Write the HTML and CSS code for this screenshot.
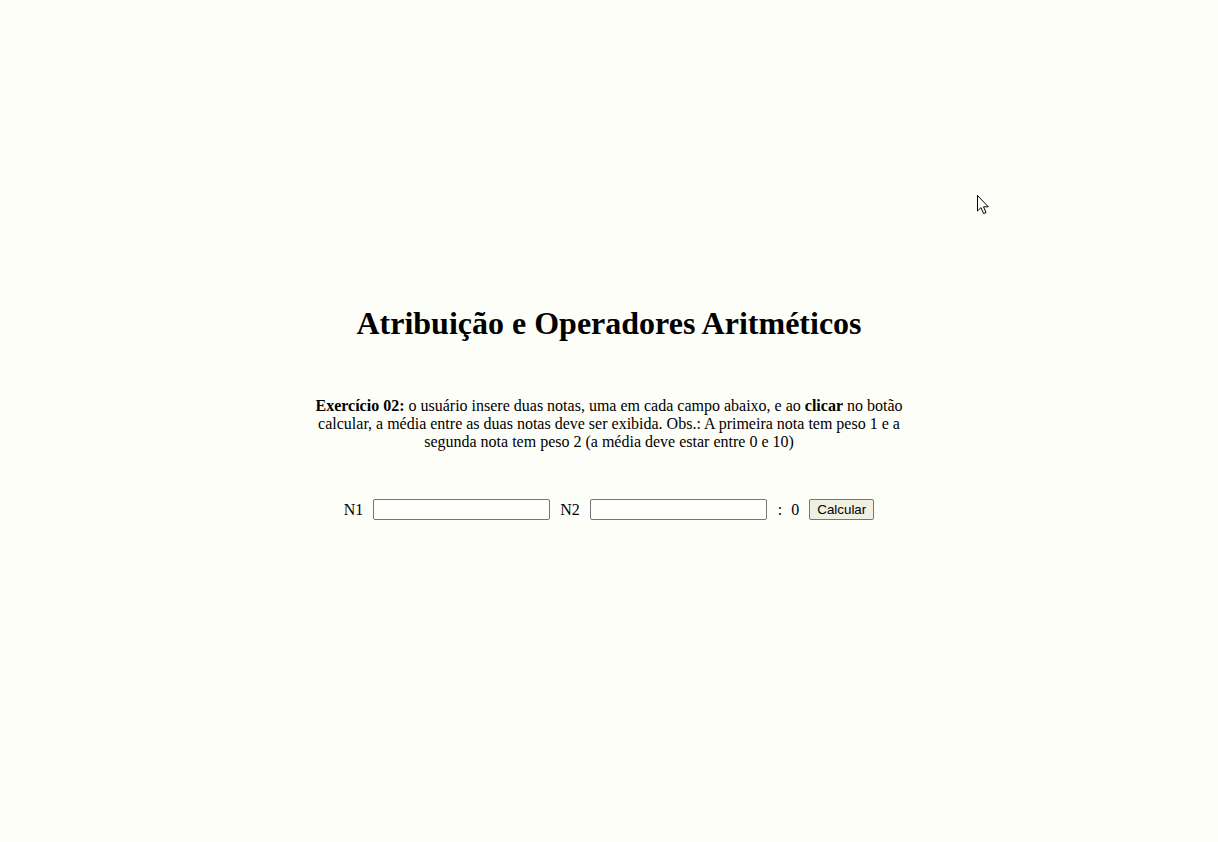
FILE: index.html
```html
<!DOCTYPE html>
<html lang="pt-BR">
<head>
<meta charset="utf-8">
<title>Atribuição e Operadores Aritméticos</title>
<link rel="stylesheet" href="styles.css">
</head>
<body>
<main class="page">
  <h1 class="title">Atribuição e Operadores Aritméticos</h1>
  <p class="desc"><strong>Exercício 02:</strong> o usuário insere duas notas, uma em cada campo abaixo, e ao <strong>clicar</strong> no botão calcular, a média entre as duas notas deve ser exibida. Obs.: A primeira nota tem peso 1 e a segunda nota tem peso 2 (a média deve estar entre 0 e 10)</p>
  <div class="row">
    <label class="lbl" for="n1">N1</label>
    <input class="field" id="n1" type="text">
    <label class="lbl" for="n2">N2</label>
    <input class="field" id="n2" type="text">
    <span class="colon">:</span>
    <span class="result">0</span>
    <button class="btn" type="button">Calcular</button>
  </div>
</main>
<svg class="cursor" width="14" height="22" viewBox="0 0 14 22" aria-hidden="true">
  <path d="M1.5 1.5 L1.5 17 L5 13.6 L7.6 19.6 L10 18.6 L7.5 12.8 L12.3 12.8 Z" fill="#fff" stroke="#000" stroke-width="1" stroke-linejoin="miter"/>
</svg>
</body>
</html>
```
FILE: styles.css
```css
html, body {
  margin: 0;
  padding: 0;
}
body {
  background-color: #fefef8;
  font-family: "Liberation Serif", "Times New Roman", serif;
  color: #000;
  min-height: 842px;
  position: relative;
}
.page {
  display: flex;
  flex-direction: column;
  align-items: center;
  padding-top: 305px;
}
.title {
  margin: 0;
  font-size: 32px;
  line-height: 37px;
  font-weight: bold;
  text-align: center;
}
.desc {
  width: 600px;
  margin: 55px 0 0;
  font-size: 16px;
  line-height: 18px;
  text-align: center;
}
.row {
  display: flex;
  align-items: center;
  justify-content: center;
  margin-top: 48px;
  font-size: 16px;
}
.lbl {
  margin-right: 10px;
}
.field {
  box-sizing: border-box;
  width: 177px;
  height: 21px;
  border: 1px solid #767676;
  border-radius: 2px;
  background: #fffffb;
  padding: 1px 2px;
  margin: 0 10px 0 0;
}
.colon {
  margin-left: 1px;
  margin-right: 9px;
}
.result {
  margin-right: 10px;
}
.btn {
  box-sizing: border-box;
  width: 65px;
  height: 21px;
  padding: 0 6px;
  font-family: "Liberation Sans", Arial, sans-serif;
  font-size: 13.33px;
  color: #000;
  background: #efefe2;
  border: 1px solid #767676;
  border-radius: 2px;
}
.cursor {
  position: absolute;
  left: 976px;
  top: 194px;
}
```
